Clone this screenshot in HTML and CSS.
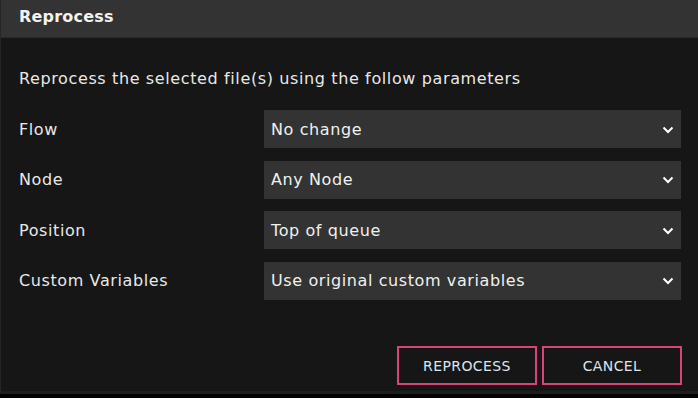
FILE: index.html
```html
<!DOCTYPE html>
<html lang="en">
<head>
    <meta charset="UTF-8">
    <title>Reprocess</title>
    <link rel="stylesheet" href="styles.css">
</head>
<body>
    <div class="dialog">
        <header class="dialog-header">
            <h1>Reprocess</h1>
        </header>

        <div class="dialog-body">
            <p class="intro">Reprocess the selected file(s) using the follow parameters</p>

            <div class="form-row">
                <label>Flow</label>
                <div class="select">
                    <span>No change</span>
                    <svg class="chevron" viewBox="0 0 12 8" width="12" height="8"><path d="M1.5 1.5 6 6l4.5-4.5" fill="none" stroke="#fff" stroke-width="2"/></svg>
                </div>
            </div>
            <div class="form-row">
                <label>Node</label>
                <div class="select">
                    <span>Any Node</span>
                    <svg class="chevron" viewBox="0 0 12 8" width="12" height="8"><path d="M1.5 1.5 6 6l4.5-4.5" fill="none" stroke="#fff" stroke-width="2"/></svg>
                </div>
            </div>
            <div class="form-row">
                <label>Position</label>
                <div class="select">
                    <span>Top of queue</span>
                    <svg class="chevron" viewBox="0 0 12 8" width="12" height="8"><path d="M1.5 1.5 6 6l4.5-4.5" fill="none" stroke="#fff" stroke-width="2"/></svg>
                </div>
            </div>
            <div class="form-row">
                <label>Custom Variables</label>
                <div class="select">
                    <span>Use original custom variables</span>
                    <svg class="chevron" viewBox="0 0 12 8" width="12" height="8"><path d="M1.5 1.5 6 6l4.5-4.5" fill="none" stroke="#fff" stroke-width="2"/></svg>
                </div>
            </div>
        </div>

        <footer class="dialog-footer">
            <button class="btn">REPROCESS</button>
            <button class="btn">CANCEL</button>
        </footer>
    </div>
</body>
</html>
```

FILE: styles.css
```css
* {
    margin: 0;
    padding: 0;
    box-sizing: border-box;
}

body {
    font-family: "DejaVu Sans", sans-serif;
    background-color: #000;
    color: #e8e8e8;
    width: 698px;
    height: 398px;
    overflow: hidden;
}

.dialog {
    height: 394px;
    background-color: #161616;
    border-left: 1px solid #262626;
    border-bottom: 3px solid #1e1e1e;
    display: flex;
    flex-direction: column;
}

.dialog-header {
    height: 38px;
    background-color: #333;
    border-bottom: 1px solid #2a2a2a;
    padding: 0 18px 5px;
    display: flex;
    align-items: center;
}

.dialog-header h1 {
    font-size: 16px;
    font-weight: bold;
    letter-spacing: 0.2px;
    color: #f2f2f2;
}

.dialog-body {
    padding: 31px 17px 0 18px;
    flex: 1;
}

.intro {
    font-size: 16px;
    letter-spacing: 0.62px;
    line-height: 20px;
    margin-bottom: 21px;
}

.form-row {
    display: flex;
    align-items: center;
    height: 38px;
    margin-bottom: 12.6px;
    font-size: 16px;
    letter-spacing: 0.6px;
}

.form-row label {
    width: 245px;
}

.select {
    flex: 1;
    height: 38px;
    background-color: #333;
    display: flex;
    align-items: center;
    justify-content: space-between;
    padding: 0 7px 0 7px;
    color: #f0f0f0;
}

.chevron {
    margin-top: 1px;
}

.dialog-footer {
    display: flex;
    justify-content: flex-end;
    gap: 5px;
    padding: 0 16px 6px 0;
}

.btn {
    width: 140px;
    height: 39px;
    background-color: #161616;
    border: 2px solid #d9437a;
    color: #dde4ee;
    font-family: "DejaVu Sans", sans-serif;
    font-size: 14px;
    letter-spacing: 0.4px;
    cursor: pointer;
}
```
